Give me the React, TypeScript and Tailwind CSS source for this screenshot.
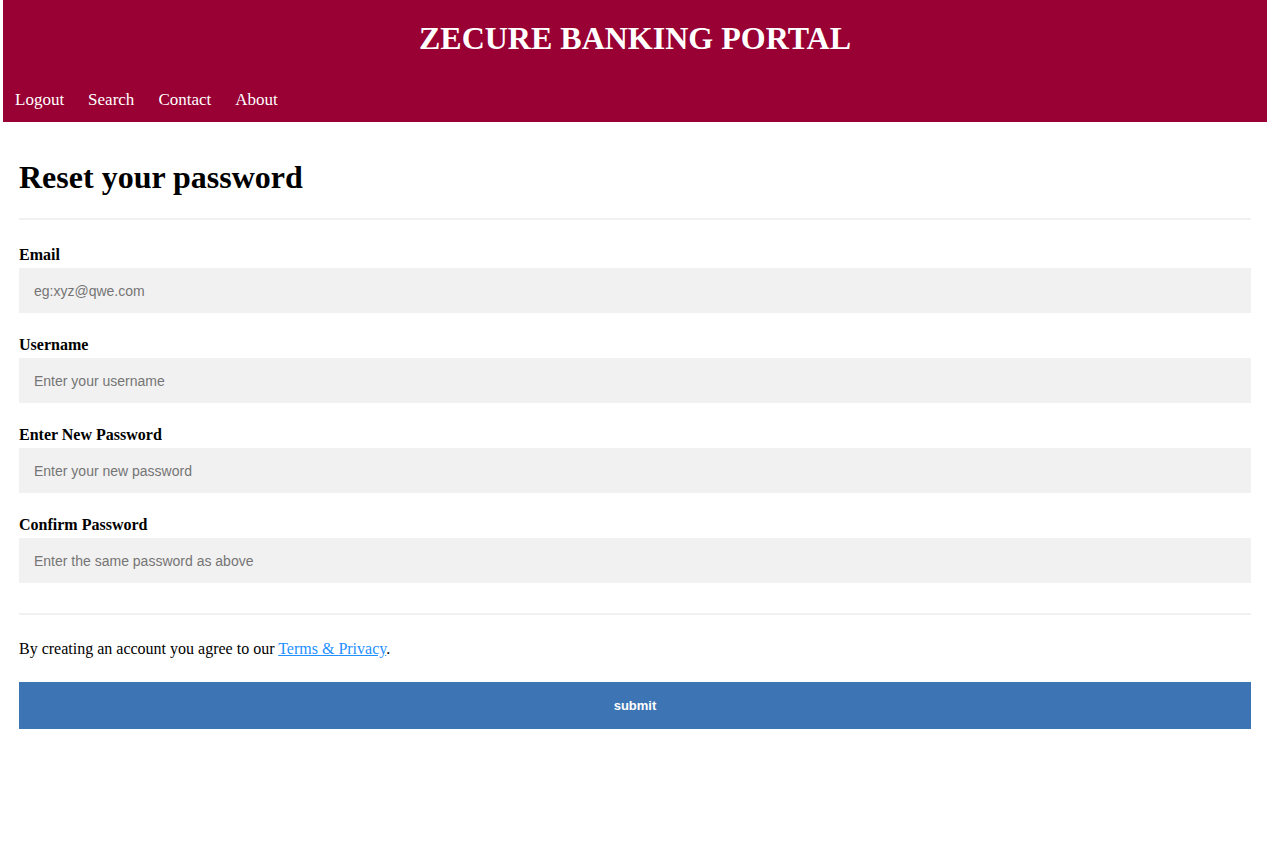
const navLinks = ["Logout", "Search", "Contact", "About"];

const fields = [
  { label: "Email", placeholder: "eg:xyz@qwe.com", type: "text" },
  { label: "Username", placeholder: "Enter your username", type: "text" },
  { label: "Enter New Password", placeholder: "Enter your new password", type: "password" },
  { label: "Confirm Password", placeholder: "Enter the same password as above", type: "password" },
];

export default function App() {
  return (
    <div className="min-h-screen bg-white pl-[3px] pr-[4px] font-['Liberation_Serif',serif] text-black">
      <header className="bg-[#990033] text-white">
        <h1 className="pt-[20px] pb-[20px] text-center text-[32px] font-bold leading-[37px]">
          ZECURE BANKING PORTAL
        </h1>
        <nav className="flex">
          {navLinks.map((link) => (
            <a key={link} href="#" className="px-3 pt-[12px] pb-[11px] text-[17px] leading-[22px] text-white">
              {link}
            </a>
          ))}
        </nav>
      </header>

      <form className="px-4 pt-[37px]">
        <h2 className="text-[32px] font-bold leading-[37px]">Reset your password</h2>
        <hr className="mt-[22px] mb-[26px] border-0 border-t-2 border-[#f1f1f1]" />

        {fields.map((f) => (
          <div key={f.label} className="mb-[23px]">
            <label className="block text-[16px] font-bold leading-[18px]">{f.label}</label>
            <input
              type={f.type}
              placeholder={f.placeholder}
              className="mt-[4px] block h-[45px] w-full bg-[#f1f1f1] px-[15px] font-['Liberation_Sans',sans-serif] text-[14px] outline-none placeholder:text-[#757575]"
            />
          </div>
        ))}

        <hr className="mt-[30px] mb-[25px] border-0 border-t-2 border-[#f1f1f1]" />

        <p className="text-[16px] leading-[18px]">
          By creating an account you agree to our{" "}
          <a href="#" className="text-[#1e90ff] underline">
            Terms &amp; Privacy
          </a>
          .
        </p>

        <button
          type="button"
          className="mt-[24px] h-[47px] w-full bg-[#3d74b3] font-['Liberation_Sans',sans-serif] text-[13px] font-bold text-white"
        >
          submit
        </button>
      </form>
    </div>
  );
}
